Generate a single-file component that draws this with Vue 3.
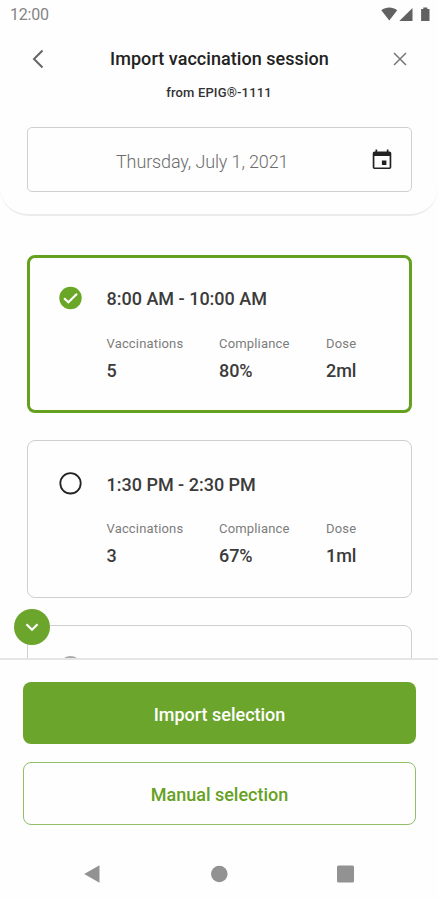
<script setup>
const sessions = [
  { time: '8:00 AM - 10:00 AM', selected: true, stats: [['Vaccinations', '5'], ['Compliance', '80%'], ['Dose', '2ml']] },
  { time: '1:30 PM - 2:30 PM', selected: false, stats: [['Vaccinations', '3'], ['Compliance', '67%'], ['Dose', '1ml']] },
]
</script>

<template>
  <div class="screen">
    <header class="header">
      <div class="status">
        <span class="clock">12:00</span>
        <svg class="status-icons" width="50" height="16" viewBox="0 0 50 16">
          <path d="M0.300 3.300C5-.3 11.500-.3 16.200 3.300L8.300 13.600Z" />
          <path d="M31.500 1V14H18.300Z" />
          <path d="M40.100 2h2.200V.4h4V2h2.200v12h-8.400Z" />
        </svg>
      </div>
      <div class="titlebar">
        <svg class="back" width="14" height="20" viewBox="0 0 14 20"><path d="M11.500 1.500 3 10l8.500 8.500" /></svg>
        <h1 class="title">Import vaccination session</h1>
        <svg class="close" width="14" height="14" viewBox="0 0 14 14"><path d="m1 1 12 12M13 1 1 13" /></svg>
      </div>
      <p class="source">from EPIG®-1111</p>
      <div class="date">
        <span class="date-text">Thursday, July 1, 2021</span>
        <svg class="calendar" width="24" height="24" viewBox="0 0 24 24">
          <path fill-rule="evenodd" d="M4.500 3.500h1V1.600h1.700v1.900h9.600V1.600h1.700v1.900h1a1.800 1.800 0 0 1 1.800 1.800v14a1.800 1.800 0 0 1-1.800 1.800h-15a1.800 1.800 0 0 1-1.800-1.800v-14a1.800 1.800 0 0 1 1.800-1.800ZM4.400 8v11.400h15.200V8Z" />
          <path d="M11.900 12.500h4.500V17h-4.500z" />
        </svg>
      </div>
    </header>

    <main class="list">
      <section v-for="s in sessions" :key="s.time" class="card" :class="{ selected: s.selected }">
        <svg v-if="s.selected" class="mark" width="24" height="24" viewBox="0 0 24 24">
          <circle cx="11.500" cy="12" r="11.200" fill="#6aa727" />
          <path d="m5.100 12.200 4.300 4.100L18 7.700" fill="none" stroke="#fff" stroke-width="2.200" />
        </svg>
        <svg v-else class="mark" width="24" height="24" viewBox="0 0 24 24">
          <circle cx="11.500" cy="12.300" r="10.200" fill="none" stroke="#222" stroke-width="1.800" />
        </svg>
        <div class="info">
          <h2 class="time">{{ s.time }}</h2>
          <dl class="stats">
            <div v-for="[label, value] in s.stats" :key="label">
              <dt>{{ label }}</dt>
              <dd>{{ value }}</dd>
            </div>
          </dl>
        </div>
      </section>
      <section class="card peek">
        <button class="expand" aria-label="Scroll down">
          <svg width="14" height="10" viewBox="0 0 14 10"><path d="m1.500 2.300 5.500 5.400 5.500-5.400" /></svg>
        </button>
        <span class="peek-mark"></span>
      </section>
    </main>

    <footer class="footer">
      <button class="btn primary">Import selection</button>
      <button class="btn outline">Manual selection</button>
      <nav class="nav">
        <svg width="18" height="20" viewBox="0 0 18 20"><path d="M1.200 10 16.500 1.200V18.800Z" /></svg>
        <svg width="18" height="20" viewBox="0 0 18 20"><circle cx="9.300" cy="10" r="8.300" /></svg>
        <svg width="18" height="20" viewBox="0 0 18 20"><rect x="0" y="1.500" width="17" height="17" rx="1.500" /></svg>
      </nav>
    </footer>
  </div>
</template>

<style>
body { margin: 0; background: #fefefe; }
</style>

<style scoped>
.screen {
  width: 438px;
  height: 900px;
  display: flex;
  flex-direction: column;
  overflow: hidden;
  background: #fefefe;
  font-family: Roboto, sans-serif;
  box-sizing: border-box;
}
.screen * { box-sizing: border-box; }
h1, h2, p, dl, dd { margin: 0; }
button { font-family: inherit; padding: 0; border: 0; }

.header {
  flex: none;
  height: 216px;
  border-bottom: 2px solid #ebebeb;
  border-radius: 0 0 28px 28px;
}
.status {
  height: 30px;
  padding: 0 7px 0 10px;
  display: flex;
  align-items: center;
  justify-content: space-between;
}
.clock { font-size: 16px; line-height: 30px; color: #858585; letter-spacing: -0.2px; }
.status-icons { fill: #616161; }
.titlebar {
  height: 58px;
  padding: 0 31px;
  display: flex;
  align-items: center;
  justify-content: space-between;
}
.back { fill: none; stroke: #666; stroke-width: 2; }
.close { fill: none; stroke: #777; stroke-width: 1.500; }
.title { padding-left: 1px; font-size: 18px; line-height: 24px; font-weight: 500; color: #222; letter-spacing: 0.050px; }
.source { height: 10px; line-height: 10px; text-align: center; font-size: 13px; color: #333; font-weight: 500; letter-spacing: 0.150px; }
.date {
  margin: 29px 26px 0 27px;
  height: 65px;
  padding: 0 17px 0 88px;
  border: 1.500px solid #d0d0d0;
  border-radius: 5px;
  display: flex;
  align-items: center;
  justify-content: space-between;
}
.date-text { padding-top: 3px; font-size: 18px; color: #6c6c6c; font-weight: 300; letter-spacing: -0.130px; }
.calendar { fill: #222; }

.list {
  flex: none;
  height: 442px;
  padding: 39px 26px 0 27px;
  display: flex;
  flex-direction: column;
  gap: 27px;
  overflow: hidden;
}
.card {
  flex: none;
  height: 158px;
  padding: 30px 0 0 31px;
  border: 1px solid #cfcfcf;
  border-radius: 8px;
  display: flex;
  gap: 23.500px;
}
.card.selected { padding: 28px 0 0 29px; border: 3px solid #65a11f; }
.mark { flex: none; }
.time { font-size: 18px; line-height: 26px; font-weight: 500; color: #3b3b3b; }
.card:not(.selected) .time { padding-top: 1px; line-height: 25px; }
.stats { margin-top: 22px; display: grid; grid-template-columns: 112.500px 107px auto; }
dt { font-size: 13px; line-height: 20px; color: #7c7c7c; letter-spacing: 0.170px; }
dd { margin-top: 5px; font-size: 18px; line-height: 24px; font-weight: 500; color: #3b3b3b; letter-spacing: -0.050px; }
.card.peek { position: relative; border-width: 1.500px; padding-top: 29px; }
.expand {
  position: absolute;
  left: -14px;
  top: -17px;
  width: 36px;
  height: 36px;
  border-radius: 50%;
  background: #6ca52b;
  display: flex;
  align-items: center;
  justify-content: center;
}
.expand svg { fill: none; stroke: #fff; stroke-width: 2.200; }
.peek-mark { width: 23px; height: 23px; background: #aaa; border-radius: 50%; margin-top: 0.500px; }

.footer {
  flex: 1;
  padding: 22px 22px 0 23px;
  border-top: 2px solid #e5e5e5;
  display: flex;
  flex-direction: column;
  background: #fefefe;
}
.btn { flex: none; height: 62px; border-radius: 8px; font-size: 18px; font-weight: 500; padding-top: 1px; }
.primary { padding-top: 2px; background: #6ca52b; color: #fff; }
.outline { margin-top: 18px; height: 63px; background: none; border: 1px solid #91bf68; color: #65a11f; }
.nav { margin: 39px 61px 0 60px; display: flex; justify-content: space-between; fill: #929292; }
</style>
